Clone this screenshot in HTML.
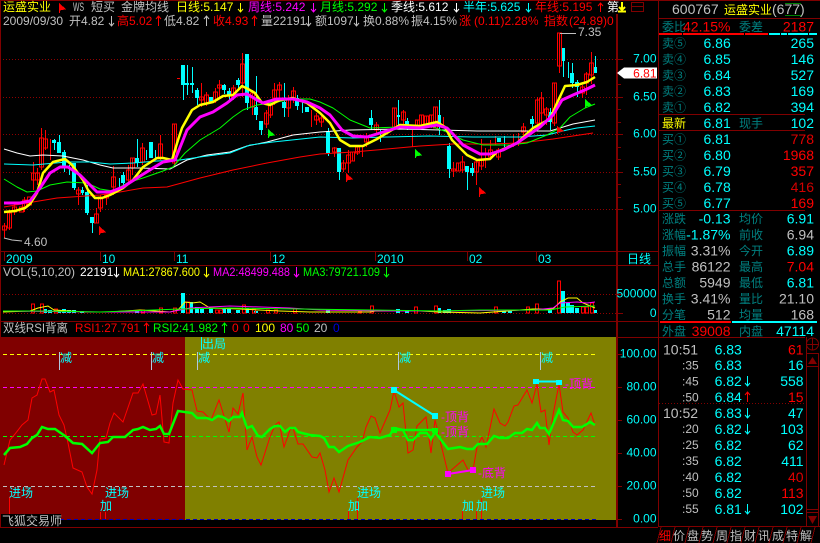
<!DOCTYPE html>
<html>
<head>
<meta charset="utf-8">
<title>运盛实业</title>
<style>
html,body{margin:0;padding:0;background:#000;width:820px;height:543px;overflow:hidden}
svg{display:block}
text{font-family:"Liberation Sans","WenQuanYi Zen Hei","Noto Sans CJK SC",sans-serif;font-size:12px}
.b text,text.b{font-size:14px}
.e{text-anchor:end}
.c{fill:#0ff}.r{fill:#f00}.g{fill:#c0c0c0}.t{fill:#008080}.y{fill:#ff0}.m{fill:#f0f}.n{fill:#0f0}.w{fill:#fff}
</style>
</head>
<body>
<svg width="820" height="543" viewBox="0 0 820 543" xmlns="http://www.w3.org/2000/svg">
<rect width="820" height="543" fill="#000"/>

<!-- RSI backgrounds -->
<rect x="0" y="337" width="185" height="183" fill="#800000"/>
<rect x="185" y="337" width="431" height="183" fill="#808000"/>

<!-- gridlines main -->
<g stroke="#900000" stroke-dasharray="1 2" fill="none" shape-rendering="crispEdges">
<path d="M3 59.5H616M3 97.5H616M3 134.5H616M3 172.5H616M3 209.5H616M3 294.5H616M3 313.5H616"/>
</g>

<!-- candles cyan wicks -->
<path shape-rendering="crispEdges" fill="none" stroke="#0ff" stroke-width="1" d="M59.5 135V153M54.5 139V150M64.5 150V172M69.5 165V175M74.5 163V190M82.5 187V195M87.5 185V215M92.5 217V233M123.5 172V187M119.5 178V190M137.5 139V167M146.5 150V160M155.5 150V160M183.5 65V100M187.5 65V95M192.5 67V93M197.5 88V105M224.5 84V94M229.5 88V100M238.5 78V90M247.5 54V110M256.5 76V120M261.5 121V135M284.5 83V117M297.5 95V110M302.5 100V113M328.5 128V156M339.5 148V180M371.5 110V130M380.5 130V142M398.5 100V125M407.5 118V130M439.5 100V135M449.5 143V178M467.5 166V190M472.5 163V176M504.5 136V147M532.5 116V128M550.5 108V130M563.5 48V77M568.5 62V78M572.5 63V88M577.5 80V97M595.5 56V73"/>
<!-- candles cyan bodies -->
<path shape-rendering="crispEdges" fill="none" stroke="#0ff" stroke-width="4" d="M54 140V143M59 142V153M64 152V168M74 163V188M82 190V193M87 192V213M92 217V223M123 175V183M137 158V163M151 142V158M183 65V85M187 83V85M192 83V85M197 90V98M211 97V102M224 85V90M229 91V95M238 80V85M247 54V103M256 107V115M261 121V130M284 102V108M297 98V106M307 107V112M328 132V153M339 148V172M371 118V125M398 115V117M407 121V127M439 115V125M449 146V169M467 166V172M472 168V173M499 138V142M532 119V124M550 112V122M563 48V61M572 73V83M577 82V87M595 67V73"/>
<!-- candles red -->
<path shape-rendering="crispEdges" fill="#000" stroke="#f00" stroke-width="1" d="M4.5 223V238M2.5 226h4v4h-4zM9.5 210V230M7.5 213h4v15h-4zM14.5 203V215M12.5 207h4v5h-4zM19.5 207h4v5h-4zM24.5 197V212M22.5 200h4v7h-4zM27.5 197h4v8h-4zM33.5 162V190M31.5 173h4v7h-4zM37.5 168V185M35.5 173h4v7h-4zM41.5 128V170M39.5 138h4v29h-4zM45.5 130V150M43.5 139h4v9h-4zM50.5 139V160M78.5 187V205M76.5 190h4v4h-4zM96.5 208V223M94.5 214h4v9h-4zM100.5 195V212M98.5 197h4v11h-4zM106.5 192V205M104.5 195h4v3h-4zM113.5 166V195M111.5 177h4v10h-4zM128.5 165V185M126.5 170h4v10h-4zM132.5 158V175M130.5 158h4v10h-4zM142.5 143V165M140.5 148h4v14h-4zM160.5 135V160M158.5 144h4v14h-4zM174.5 124V167M172.5 124h4v39h-4zM201.5 83V107M199.5 97h4v3h-4zM206.5 92V106M204.5 95h4v8h-4zM215.5 88V103M213.5 92h4v8h-4zM219.5 80V97M217.5 85h4v3h-4zM233.5 85V100M231.5 88h4v9h-4zM242.5 53V97M240.5 64h4v19h-4zM252.5 90V115M250.5 93h4v14h-4zM266.5 110V128M264.5 113h4v11h-4zM270.5 103V118M268.5 103h4v12h-4zM274.5 83V105M272.5 90h4v8h-4zM279.5 82V100M277.5 85h4v5h-4zM288.5 95V117M286.5 99h4v9h-4zM293.5 87V103M291.5 91h4v7h-4zM311.5 110V127M316.5 113V125M314.5 116h4v4h-4zM321.5 116V127M319.5 118h4v4h-4zM334.5 147V157M332.5 148h4v4h-4zM343.5 160V172M341.5 163h4v6h-4zM348.5 150V173M346.5 155h4v8h-4zM352.5 152V161M350.5 152h4v9h-4zM357.5 145V155M355.5 147h4v6h-4zM362.5 145V157M366.5 133V147M364.5 137h4v5h-4zM376.5 122V135M374.5 125h4v5h-4zM394.5 108V127M392.5 108h4v19h-4zM403.5 110V127M401.5 112h4v8h-4zM412.5 130V147M417.5 120V127M415.5 120h4v7h-4zM421.5 115V130M419.5 115h4v10h-4zM426.5 116V125M424.5 116h4v9h-4zM431.5 115V128M429.5 115h4v10h-4zM435.5 107V128M433.5 107h4v21h-4zM443.5 117V125M453.5 162V177M451.5 169h4v2h-4zM458.5 163V171M456.5 163h4v8h-4zM462.5 156V173M460.5 162h4v8h-4zM476.5 160V185M474.5 162h4v10h-4zM481.5 139V170M479.5 160h4v6h-4zM485.5 148V168M490.5 140V160M488.5 150h4v7h-4zM495.5 136V145M498.5 148V160M496.5 150h4v7h-4zM513.5 134V147M518.5 133V146M523.5 123V135M521.5 127h4v5h-4zM537.5 97V127M535.5 100h4v23h-4zM541.5 92V122M539.5 98h4v15h-4zM546.5 107V125M544.5 109h4v6h-4zM554.5 83V126M552.5 83h4v40h-4zM559.5 33V73M557.5 33h4v33h-4zM582.5 85V98M580.5 87h4v6h-4zM586.5 72V95M584.5 74h4v9h-4zM591.5 52V84M589.5 63h4v12h-4zM177 78.5h3"/>

<!-- MAs -->
<g fill="none" stroke-linejoin="round">
<polyline stroke="#f00" stroke-width="1" points="4,207 33,202 57,198 100,195 120,192 143,188 167,187 200,178 233,170 267,163 300,157 320,154 353,152 387,149 420,146 453,144 487,144 520,143 553,139 593,133"/>
<polyline stroke="#fff" stroke-width="1" points="4,149 17,153 30,156 43,155 63,156 83,160 100,165 113,168 140,168 170,169 187,160 207,155 230,152 247,146 267,142 293,135 320,132 350,130 400,129 440,130 477,131 520,131 550,131 560,128 573,124 595,120"/>
<polyline stroke="#0ff" stroke-width="1" points="4,164 33,165 67,162 90,162 110,164 133,163 157,161 180,160 200,157 230,153 250,145 273,142 320,137 353,138 387,137 430,136 473,137 520,137 547,135 567,130 577,128 595,126"/>
<polyline stroke="#0f0" stroke-width="1" points="4,179 17,187 27,192 37,191 50,185 67,182 87,183 100,189 113,191 127,183 143,178 163,171 173,167 185,153 200,140 220,128 233,117 243,110 257,105 277,102 293,99 310,99 320,102 333,108 350,120 370,128 400,127 430,126 447,132 463,140 483,145 510,145 527,143 547,135 560,128 570,117 585,108 595,104"/>
<polyline stroke="#ff0" stroke-width="2.5" points="4,212 15,211 25,208 30,204 37,193 43,173 53,162 65,159 72,165 83,180 88,190 95,198 102,198 110,195 123,188 133,180 143,167 157,158 163,158 172,160 178,140 182,128 192,110 200,105 213,102 223,96 233,95 242,86 248,89 255,93 262,103 270,105 280,100 293,98 307,103 320,113 330,123 340,140 350,146 363,146 377,139 400,125 420,126 437,122 445,127 452,140 467,155 477,160 490,159 497,152 517,143 533,128 550,119 557,103 565,86 577,85 587,82 595,77"/>
<polyline stroke="#f0f" stroke-width="3" points="4,203 20,203 30,201 40,188 50,173 60,167 68,167 80,175 90,185 97,192 110,192 123,187 137,178 153,168 163,162 175,160 183,140 187,130 200,117 213,112 227,103 237,95 247,94 257,100 263,103 277,99 293,99 307,102 320,108 330,115 342,130 353,136 367,137 380,133 400,127 420,128 437,125 447,128 452,133 463,145 480,154 490,154 503,150 517,143 540,127 553,115 562,100 573,95 587,89 595,85"/>
</g>

<!-- flags -->
<path fill="#f00" stroke="#f00" shape-rendering="crispEdges" d="M99.5 227V235M99.5 227L105 232L99.5 233ZM346.5 174V182M346.5 174L352 179L346.5 180ZM479.5 188V197M479.5 188L485 193L479.5 194ZM557.5 127V134M557.5 127L563 131L557.5 132ZM59.5 4V13M59.5 4L65 9L59.5 10Z"/>
<path fill="#0f0" stroke="#0f0" shape-rendering="crispEdges" d="M268.5 130V138M268.5 130L274 135L268.5 136ZM415.5 150V158M415.5 150L421 155L415.5 156ZM585.5 100V108M585.5 100L591 105L585.5 106Z"/>

<path d="M560 33.5H576M4 238L12 240L22 241" stroke="#c0c0c0" fill="none"/>
<text x="578" y="36" class="g">7.35</text>
<text x="24" y="246" class="g">4.60</text>

<!-- volume bars -->
<path shape-rendering="crispEdges" fill="none" stroke="#0ff" stroke-width="4" d="M45 309V313M50 310V313M59 310V313M64 309V313M69 310V313M74 310V313M82 311V313M137 310V313M183 293V313M191 302V313M197 307V313M202 309V313M211 308V313M224 309V313M229 309V313M238 310V313M247 308V313M256 311V313M328 310V313M398 309V313M407 310V313M439 308V313M445 310V313M449 309V313M504 311V313M510 311V313M550 308V313M563 291V313M568 303V313M572 305V313M577 308V313M595 310V313"/>
<path shape-rendering="crispEdges" fill="none" stroke="#f00" d="M31.5 304h3v9h-3zM40.5 304h3v9h-3zM54.5 309h3v4h-3zM141.5 310h3v3h-3zM159.5 308h3v5h-3zM173.5 308h3v5h-3zM186.5 302h3v11h-3zM215.5 310h3v3h-3zM219.5 310h3v3h-3zM242.5 305h3v8h-3zM252.5 309h3v4h-3zM266.5 310h3v3h-3zM274.5 310h3v3h-3zM293.5 309h3v4h-3zM358.5 311h3v2h-3zM370.5 306h3v7h-3zM414.5 307h3v6h-3zM434.5 306h3v7h-3zM494.5 307h3v6h-3zM526.5 307h3v6h-3zM535.5 304h3v9h-3zM557.5 281h3v32h-3zM581.5 307h3v6h-3zM585.5 307h3v6h-3zM590.5 303h3v10h-3z"/>
<g fill="none" stroke-width="1">
<polyline stroke="#ff0" points="3,312 30,311 38,308 48,306 54,310 70,311 85,312 110,312 140,310 170,312 178,310 185,302 192,303 200,302 205,305 210,308 240,309 280,311 310,312 370,312 375,311 420,311 440,312 480,313 533,309 553,309 560,302 568,298 577,298 583,303 595,308"/>
<polyline stroke="#f0f" points="3,311 100,312 170,312 190,308 230,306 290,308 320,310 390,311 440,311 533,310 553,308 560,303 577,302 587,303 595,302"/>
<polyline stroke="#0f0" points="3,311 40,311 100,312 180,309 230,308 300,309 440,311 480,310 550,310 565,307 595,306"/>
</g>

<!-- RSI dashed -->
<g fill="none" stroke-dasharray="4 3" shape-rendering="crispEdges">
<path stroke="#ff0" d="M3 354.5H596"/>
<path stroke="#f0f" d="M3 387.5H596"/>
<path stroke="#0f0" d="M3 436.5H596"/>
<path stroke="#c0c0c0" d="M3 486.5H596"/>
<path stroke="#0000c0" d="M60 519.5H596"/>
</g>

<!-- RSI signal poles -->
<path stroke="#f00" fill="none" d="M9.5 497V519M100.5 512V519M105.5 512V519M348.5 511V519M357.5 498V519M462.5 511V519M476.5 511V519M481.5 498V519"/>
<path stroke="#b0c8e0" fill="none" d="M59.5 352V370M151.5 352V370M197.5 352V370M398.5 352V370M540.5 352V370"/>
<path stroke="#0ff" fill="none" d="M201.5 337V350"/>

<!-- RSI lines -->
<polyline fill="none" stroke="#f00" stroke-width="1" points="4,465 10,440 15,434 22,425 28,420 32,398 37,395 42,379 45,379 50,392 54,390 59,415 64,425 68,443 73,468 82,472 87,487 92,494 97,470 100,439 106,438 110,423 114,413 123,422 133,393 138,393 143,384 152,415 156,414 160,395 164,442 169,443 173,403 178,380 183,389 192,390 197,411 203,412 211,420 219,400 229,432 233,408 238,414 243,393 247,450 252,437 257,457 261,465 270,437 275,425 279,422 284,447 290,430 293,428 298,444 303,444 312,457 317,458 320,453 325,470 329,492 334,478 339,492 348,460 357,447 362,442 366,427 371,416 375,418 380,433 390,410 394,391 399,407 403,403 408,453 413,450 417,426 426,417 431,453 435,420 448,473 463,460 468,470 473,470 477,447 482,437 486,447 494,409 500,423 505,426 508,422 514,406 518,405 527,390 532,403 537,384 541,412 545,410 549,445 553,415 559,384 563,412 568,418 573,432 577,435 583,430 591,413 595,425"/>
<polyline fill="none" stroke="#0f0" stroke-width="2.5" points="4,455 10,448 20,447 27,444 32,438 37,435 42,427 48,429 55,429 65,436 73,443 82,444 92,453 100,443 108,442 113,437 125,437 133,430 138,429 143,427 150,430 156,429 160,426 164,434 169,434 178,411 192,413 197,418 207,418 212,420 218,416 223,417 229,421 233,417 240,417 242,413 247,428 252,426 258,436 262,437 270,429 275,426 280,426 285,432 290,428 295,428 298,432 310,435 320,436 324,438 329,447 334,447 339,452 348,446 360,442 370,437 380,438 390,435 394,428 403,430 408,440 413,440 420,433 427,433 431,439 435,432 448,449 460,447 467,449 473,449 478,444 487,444 494,436 500,438 508,438 515,433 522,433 527,429 532,430 537,423 540,428 545,428 549,434 559,410 563,420 568,421 573,427 582,427 590,422 595,425"/>

<!-- divergence marks -->
<path fill="none" stroke="#0ff" stroke-width="2" d="M394 390L435 416M536 381.5H559"/>
<path fill="none" stroke="#0f0" stroke-width="2.5" d="M394 430H435"/>
<path fill="none" stroke="#f0f" stroke-width="2" d="M448 474L473 470"/>
<path fill="#0ff" d="M391 387h6v6h-6zM432 413h6v6h-6zM533 379h6v5h-6zM556 380h6v5h-6z"/>
<path fill="#0f0" d="M391 427h6v6h-6zM432 428h6v5h-6z"/>
<path fill="#f0f" d="M445 471h6v6h-6zM470 467h6v6h-6z"/>
<text x="441" y="421" class="m">-顶背</text>
<text x="441" y="436" class="m">-顶背</text>
<text x="478" y="477" class="m">-底背</text>
<text x="565" y="388" class="m">-顶背</text>

<text x="60" y="362" class="c">减</text><text x="152" y="362" class="c">减</text><text x="198" y="362" class="c">减</text><text x="399" y="362" class="c">减</text><text x="541" y="362" class="c">减</text>
<text x="202" y="348" class="c">出局</text>
<text x="9" y="497" class="c">进场</text><text x="105" y="497" class="c">进场</text><text x="357" y="497" class="c">进场</text><text x="481" y="497" class="c">进场</text>
<text x="100" y="510" class="c">加</text><text x="348" y="510" class="c">加</text><text x="462" y="510" class="c">加</text><text x="476" y="510" class="c">加</text>

<!-- bottom black zone and stamp -->
<rect x="0" y="520" width="658" height="23" fill="#000"/>
<rect x="1" y="514" width="60" height="13" fill="#000"/>
<text x="2" y="525" class="g">飞狐交易师</text>

<!-- frame lines -->
<g fill="none" stroke="#800000" shape-rendering="crispEdges">
<path d="M0 .5H820M.5 0V527M0 527.5H658M0 251.5H658M0 265.5H658M0 321.5H658M658.5 0V527M659 18.5H820M659 114.5H805M659 130.5H805M659 210.5H805M659 337.5H805M616 337.5H658"/>
<path stroke-width="2" d="M617 14V528"/>
<path d="M4.5 251V261M100.5 251V261M174.5 251V261M270.5 251V261M375.5 251V261M467.5 251V261M536.5 251V261"/>
<path d="M618 59.5h5M618 72.5h3M618 84.5h3M618 97.5h5M618 109.5h3M618 122.5h3M618 134.5h5M618 147.5h3M618 159.5h3M618 172.5h5M618 184.5h3M618 197.5h3M618 209.5h5M618 294.5h5M618 313.5h5M618 354.5h4M618 387.5h4M618 420.5h4M618 453.5h4M618 486.5h4M618 519.5h4"/>
<!-- tick separator dotted -->
<path stroke-dasharray="1 2" d="M659 403.5H804"/>
<!-- scrollbar -->
<path d="M806.5 337V526M818.5 353V526M806.5 353.5H819M806.5 366.5H819M806.5 509.5H819M806.5 512.5H819M806.5 526.5H820"/>
<!-- tabs -->
<path d="M658 526.5H820M661 527L657 543M675 527L671 543M689 527L685 543M703 527L699 543M717 527L713 543M731 527L727 543M745 527L741 543M759 527L755 543M773 527L769 543M787 527L783 543M801 527L797 543M815 527L811 543"/>
</g>
<circle cx="812.5" cy="344" r="6" fill="none" stroke="#800000"/>
<path d="M806 344.5H819M812.5 338V350" stroke="#800000" fill="none"/>
<path d="M812.5 357L808 364H817Z" fill="#800000"/>
<path d="M812.5 524L808 516H817Z" fill="#800000"/>

<!-- bars -->
<g shape-rendering="crispEdges">
<rect x="659" y="33" width="109" height="2" fill="#f00"/>
<rect x="682" y="33" width="1" height="2" fill="#000"/><rect x="744" y="33" width="1" height="2" fill="#000"/>
<rect x="769" y="33" width="48" height="2" fill="#0ff"/>
<rect x="780" y="33" width="1" height="2" fill="#000"/><rect x="787" y="33" width="1" height="2" fill="#000"/><rect x="808" y="33" width="1" height="2" fill="#000"/>
<rect x="660" y="321" width="71" height="2" fill="#f00"/>
<rect x="732" y="321" width="85" height="2" fill="#0ff"/>
</g>

<!-- header row 1 -->
<text x="3" y="11" class="y">运盛实业</text>
<text x="73" y="11" class="g" textLength="11" lengthAdjust="spacingAndGlyphs">WS</text>
<text x="91" y="11" class="g">短买</text>
<text x="121" y="11" class="g">金牌均线</text>
<text x="176" y="11" class="y">日线:5.147</text>
<text x="248" y="11" class="m">周线:5.242</text>
<text x="320" y="11" class="n">月线:5.292</text>
<text x="391" y="11" class="w">季线:5.612</text>
<text x="463" y="11" class="c">半年:5.625</text>
<text x="535" y="11" class="r">年线:5.195</text>
<text x="607" y="11" class="w">第</text>
<path d="M622 2V9M619 7L622 10L625 7M618 11.5H626" stroke="#ff0" stroke-width="2" fill="none"/>
<path d="M631.5 2.5H643.5V11.5H631.5ZM631.5 6.5H643.5" stroke="#800000" fill="none" shape-rendering="crispEdges"/>

<!-- header row 2 -->
<text x="3" y="25" class="g">2009/09/30</text>
<text x="69" y="25" class="g">开4.82</text>
<text x="117" y="25" class="r">高5.02</text>
<text x="164" y="25" class="g">低4.82</text>
<text x="213" y="25" class="r">收4.93</text>
<text x="261" y="25" class="g">量22191</text>
<text x="315" y="25" class="g">额1097</text>
<text x="363" y="25" class="g">换0.88%</text>
<text x="411" y="25" class="g">振4.15%</text>
<text x="459" y="25" class="r">涨</text>
<text x="474" y="25" class="r">(0.11)2.28%</text>
<text x="544" y="25" class="r">指数</text>
<text x="569" y="25" class="r">(24.89)0</text>

<!-- vol & rsi headers -->
<text x="3" y="276" class="g">VOL(5,10,20)</text>
<text x="80" y="276" class="w">22191</text>
<text x="123" y="276" class="y" textLength="77" lengthAdjust="spacingAndGlyphs">MA1:27867.600</text>
<text x="213" y="276" class="m" textLength="77" lengthAdjust="spacingAndGlyphs">MA2:48499.488</text>
<text x="303" y="276" class="n" textLength="77" lengthAdjust="spacingAndGlyphs">MA3:79721.109</text>
<text x="3" y="332" class="g" textLength="65" lengthAdjust="spacingAndGlyphs">双线RSI背离</text>
<text x="75" y="332" class="r" textLength="65" lengthAdjust="spacingAndGlyphs">RSI1:27.791</text>
<text x="153" y="332" class="n" textLength="65" lengthAdjust="spacingAndGlyphs">RSI2:41.982</text>
<text x="232" y="332" class="r">0</text><text x="243" y="332" class="r">0</text>
<text x="255" y="332" class="y">100</text>
<text x="280" y="332" class="m">80</text>
<text x="296" y="332" class="n">50</text>
<text x="314" y="332" class="g">20</text>
<text x="333" y="332" fill="#0000e0">0</text>

<!-- arrows -->
<g fill="none">
<path stroke="#ff0" d="M240.5 3V12M238 9L240.5 12L243 9M206.5 267V277M204 274L206.5 277L209 274"/>
<path stroke="#f0f" d="M313.5 3V12M311 9L313.5 12L316 9M296.5 267V277M294 274L296.5 277L299 274"/>
<path stroke="#0f0" d="M384.5 3V12M382 9L384.5 12L387 9M386.5 267V277M384 274L386.5 277L389 274M224.5 323V333M222 326L224.5 323L227 326"/>
<path stroke="#fff" d="M456.5 3V12M454 9L456.5 12L459 9M116.5 267V277M114 274L116.5 277L119 274"/>
<path stroke="#0ff" d="M528.5 3V12M526 9L528.5 12L531 9M747.5 376V386M745 383L747.5 386L750 383M747.5 408V418M745 415L747.5 418L750 415M747.5 424V434M745 431L747.5 434L750 431M747.5 504V514M745 511L747.5 514L750 511"/>
<path stroke="#f00" d="M600.5 3V12M598 6L600.5 3L603 6M158.5 16V26M156 19L158.5 16L161 19M254.5 16V26M252 19L254.5 16L257 19M146.5 323V333M144 326L146.5 323L149 326M747.5 392V402M745 395L747.5 392L750 395"/>
<path stroke="#c0c0c0" d="M111.5 16V26M109 23L111.5 26L114 23M206.5 16V26M204 19L206.5 16L209 19M308.5 16V26M306 23L308.5 26L311 23M356.5 16V26M354 23L356.5 26L359 23"/>
</g>

<!-- axis labels -->
<g class="e">
<text x="656.5" y="62.5" class="c e">7.00</text>
<text x="656.5" y="100.5" class="c e">6.50</text>
<text x="656.5" y="137.5" class="c e">6.00</text>
<text x="656.5" y="175.5" class="c e">5.50</text>
<text x="656.5" y="212.5" class="c e">5.00</text>
<text x="656.5" y="297.5" class="c e">500000</text>
<text x="656.5" y="317" class="c e">0</text>
<text x="656.5" y="357.5" class="c e">100.00</text>
<text x="656.5" y="390.5" class="c e">80.00</text>
<text x="656.5" y="423.5" class="c e">60.00</text>
<text x="656.5" y="456.5" class="c e">40.00</text>
<text x="656.5" y="489.5" class="c e">20.00</text>
<text x="656.5" y="522.5" class="c e">0.00</text>
</g>
<path d="M617 73L624 67.5H657V78.5H624Z" fill="#fff"/>
<text x="656.5" y="77.5" class="r e">6.81</text>
<text x="627" y="263" class="c">日线</text>

<text x="6" y="263" class="c">2009</text><text x="102" y="263" class="c">10</text><text x="176" y="263" class="c">11</text><text x="272" y="263" class="c">12</text><text x="377" y="263" class="c">2010</text><text x="469" y="263" class="c">02</text><text x="538" y="263" class="c">03</text>

<!-- right panel -->
<text x="672" y="14" class="b g">600767</text>
<text x="724" y="14" class="y">运盛实业</text>
<text x="772" y="14" class="b g">(677)</text>
<path d="M785 3.5H801M785 15.5H801" stroke="#008000" fill="none" shape-rendering="crispEdges"/>

<text x="662" y="31" class="t">委比</text>
<text x="683" y="31.5" class="b r">42.15%</text>
<text x="739" y="31" class="t">委差</text>
<text x="814" y="31.5" class="b r e">2187</text>

<g>
<text x="662" y="47.5" class="t">卖⑤</text><text x="662" y="63.5" class="t">卖④</text><text x="662" y="79.5" class="t">卖③</text><text x="662" y="95.5" class="t">卖②</text><text x="662" y="111.5" class="t">卖①</text>
<text x="662" y="127.5" class="y">最新</text>
<text x="739" y="127.5" class="t">现手</text>
<text x="662" y="143.5" class="t">买①</text><text x="662" y="159.5" class="t">买②</text><text x="662" y="175.5" class="t">买③</text><text x="662" y="191.5" class="t">买④</text><text x="662" y="207.5" class="t">买⑤</text>
<text x="662" y="223" class="t">涨跌</text><text x="662" y="239" class="t">涨幅</text><text x="662" y="255" class="t">振幅</text><text x="662" y="271" class="t">总手</text><text x="662" y="287" class="t">总额</text><text x="662" y="303" class="t">换手</text><text x="662" y="319" class="t">分笔</text>
<text x="739" y="223" class="t">均价</text><text x="739" y="239" class="t">前收</text><text x="739" y="255" class="t">今开</text><text x="739" y="271" class="t">最高</text><text x="739" y="287" class="t">最低</text><text x="739" y="303" class="t">量比</text><text x="739" y="319" class="t">均量</text>
<text x="662" y="335.5" class="t">外盘</text><text x="739" y="335.5" class="t">内盘</text>
</g>
<g class="b">
<text x="703.5" y="48" class="c">6.86</text><text x="703.5" y="64" class="c">6.85</text><text x="703.5" y="80" class="c">6.84</text><text x="703.5" y="96" class="c">6.83</text><text x="703.5" y="112" class="c">6.82</text><text x="703.5" y="128" class="c">6.81</text>
<text x="703.5" y="144" class="c">6.81</text><text x="703.5" y="160" class="c">6.80</text><text x="703.5" y="176" class="c">6.79</text><text x="703.5" y="192" class="c">6.78</text><text x="703.5" y="208" class="c">6.77</text>
<text x="814" y="48" class="c e">265</text><text x="814" y="64" class="c e">146</text><text x="814" y="80" class="c e">527</text><text x="814" y="96" class="c e">169</text><text x="814" y="112" class="c e">394</text><text x="814" y="128" class="c e">102</text>
<text x="814" y="144" fill="#e00000" class="e">778</text><text x="814" y="160" class="r e">1968</text><text x="814" y="176" class="r e">357</text><text x="814" y="192" fill="#d00000" class="e">416</text><text x="814" y="208" class="r e">169</text>

<text x="730.5" y="223.5" class="c e">-0.13</text><text x="730.5" y="239.5" class="c e">-1.87%</text><text x="730.5" y="255.5" class="g e">3.31%</text><text x="730.5" y="271.5" class="g e">86122</text><text x="730.5" y="287.5" class="g e">5949</text><text x="730.5" y="303.5" class="g e">3.41%</text><text x="730.5" y="319.5" class="g e">512</text>
<text x="814" y="223.5" class="c e">6.91</text><text x="814" y="239.5" class="g e">6.94</text><text x="814" y="255.5" class="c e">6.89</text><text x="814" y="271.5" class="r e">7.04</text><text x="814" y="287.5" class="c e">6.81</text><text x="814" y="303.5" class="g e">21.10</text><text x="814" y="319.5" class="g e">168</text>
<text x="730.5" y="336" class="r e">39008</text><text x="814" y="336" class="c e">47114</text>

<text x="663" y="354.5" class="g">10:51</text>
<text x="663" y="418" class="g">10:52</text>
<text x="714.6" y="354.5" class="c">6.83</text><text x="714.6" y="370" class="c">6.83</text><text x="714.6" y="386" class="c">6.82</text><text x="714.6" y="402" class="c">6.84</text><text x="714.6" y="418" class="c">6.83</text><text x="714.6" y="434" class="c">6.82</text><text x="714.6" y="450" class="c">6.82</text><text x="714.6" y="466" class="c">6.82</text><text x="714.6" y="482" class="c">6.82</text><text x="714.6" y="498" class="c">6.82</text><text x="714.6" y="514" class="c">6.81</text>
<text x="803.6" y="354.5" class="r e">61</text><text x="803.6" y="370" class="c e">16</text><text x="803.6" y="386" class="c e">558</text><text x="803.6" y="402" class="r e">15</text><text x="803.6" y="418" class="c e">47</text><text x="803.6" y="434" class="c e">103</text><text x="803.6" y="450" class="c e">62</text><text x="803.6" y="466" class="c e">411</text><text x="803.6" y="482" fill="#e00000" class="e">40</text><text x="803.6" y="498" class="r e">113</text><text x="803.6" y="514" class="c e">102</text>
</g>
<text x="682" y="369.5" class="g">:35</text><text x="682" y="385.5" class="g">:45</text><text x="682" y="401.5" class="g">:50</text><text x="682" y="433" class="g">:20</text><text x="682" y="449" class="g">:25</text><text x="682" y="465" class="g">:35</text><text x="682" y="481" class="g">:40</text><text x="682" y="497" class="g">:50</text><text x="682" y="513" class="g">:55</text>

<!-- tabs -->
<text x="659" y="540" class="r">细</text>
<text x="673" y="540" class="g">价</text><text x="687" y="540" class="g">盘</text><text x="701" y="540" class="g">势</text><text x="716" y="540" class="g">周</text><text x="730" y="540" class="g">指</text><text x="744" y="540" class="g">财</text><text x="758" y="540" class="g">讯</text><text x="772" y="540" class="g">成</text><text x="786" y="540" class="g">特</text><text x="800" y="540" class="g">解</text>
</svg>
</body>
</html>
